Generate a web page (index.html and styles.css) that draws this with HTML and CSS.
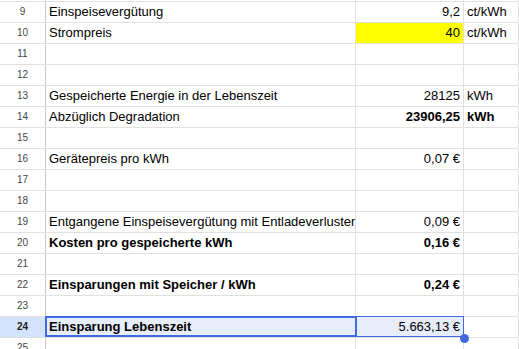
FILE: index.html
```html
<!DOCTYPE html>
<html lang="de">
<head>
<meta charset="utf-8">
<title>Speicher</title>
<link rel="stylesheet" href="styles.css">
</head>
<body>
<div class="sheet">
  <div class="row"><div class="rh"></div><div class="c"></div><div class="c"></div><div class="c"></div></div>
  <div class="row"><div class="rh">9</div><div class="c">Einspeisevergütung</div><div class="c num">9,2</div><div class="c">ct/kWh</div></div>
  <div class="row"><div class="rh">10</div><div class="c">Strompreis</div><div class="c num yellow">40</div><div class="c">ct/kWh</div></div>
  <div class="row"><div class="rh">11</div><div class="c"></div><div class="c"></div><div class="c"></div></div>
  <div class="row"><div class="rh">12</div><div class="c"></div><div class="c"></div><div class="c"></div></div>
  <div class="row"><div class="rh">13</div><div class="c">Gespeicherte Energie in der Lebenszeit</div><div class="c num">28125</div><div class="c">kWh</div></div>
  <div class="row"><div class="rh">14</div><div class="c">Abzüglich Degradation</div><div class="c num bold">23906,25</div><div class="c bold">kWh</div></div>
  <div class="row"><div class="rh">15</div><div class="c"></div><div class="c"></div><div class="c"></div></div>
  <div class="row"><div class="rh">16</div><div class="c">Gerätepreis pro kWh</div><div class="c num">0,07 €</div><div class="c"></div></div>
  <div class="row"><div class="rh">17</div><div class="c"></div><div class="c"></div><div class="c"></div></div>
  <div class="row"><div class="rh">18</div><div class="c"></div><div class="c"></div><div class="c"></div></div>
  <div class="row"><div class="rh">19</div><div class="c">Entgangene Einspeisevergütung mit Entladeverlusten</div><div class="c num">0,09 €</div><div class="c"></div></div>
  <div class="row"><div class="rh">20</div><div class="c bold">Kosten pro gespeicherte kWh</div><div class="c num bold">0,16 €</div><div class="c"></div></div>
  <div class="row"><div class="rh">21</div><div class="c"></div><div class="c"></div><div class="c"></div></div>
  <div class="row"><div class="rh">22</div><div class="c bold">Einsparungen mit Speicher / kWh</div><div class="c num bold">0,24 €</div><div class="c"></div></div>
  <div class="row"><div class="rh">23</div><div class="c"></div><div class="c"></div><div class="c"></div></div>
  <div class="row selected"><div class="rh">24</div><div class="c sel bold">Einsparung Lebenszeit</div><div class="c sel num">5.663,13 €</div><div class="c"></div></div>
  <div class="row"><div class="rh">25</div><div class="c"></div><div class="c"></div><div class="c"></div></div>
  <div class="range"></div>
  <div class="active"></div>
  <div class="handle"></div>
</div>
</body>
</html>
```

FILE: styles.css
```css
html, body {
  margin: 0;
  padding: 0;
  background: #ffffff;
  overflow: hidden;
}

body {
  font-family: "Liberation Sans", Arial, sans-serif;
  color: #000000;
}

.sheet {
  position: relative;
  margin-top: -20px;
}

.row {
  display: grid;
  grid-template-columns: 46px 310px 108px 1fr;
  height: 21px;
  box-sizing: border-box;
  border-top: 1px solid #e1e1e1;
}

.c {
  box-sizing: border-box;
  border-right: 1px solid #e1e1e1;
  padding: 0 3px;
  font-size: 13px;
  line-height: 20px;
  white-space: nowrap;
  overflow: hidden;
}

.rh {
  box-sizing: border-box;
  border-right: 1px solid #c4c7c5;
  text-align: center;
  font-size: 10px;
  line-height: 20px;
  color: #444746;
}

.num {
  text-align: right;
}

.bold {
  font-weight: bold;
}

.yellow {
  background: #ffff00;
}

.sel {
  background: #e8edfb;
}

.selected .rh {
  background: #d3e3fd;
  color: #1f1f1f;
  font-weight: bold;
}

.range {
  position: absolute;
  left: 45px;
  top: 336px;
  width: 419px;
  height: 21px;
  box-sizing: border-box;
  border: 1px solid #4169e1;
}

.active {
  position: absolute;
  left: 45px;
  top: 336px;
  width: 312px;
  height: 21px;
  box-sizing: border-box;
  border: 2px solid #4169e1;
}

.handle {
  position: absolute;
  left: 460px;
  top: 354px;
  width: 9px;
  height: 9px;
  border-radius: 50%;
  background: #4169e1;
}
```
